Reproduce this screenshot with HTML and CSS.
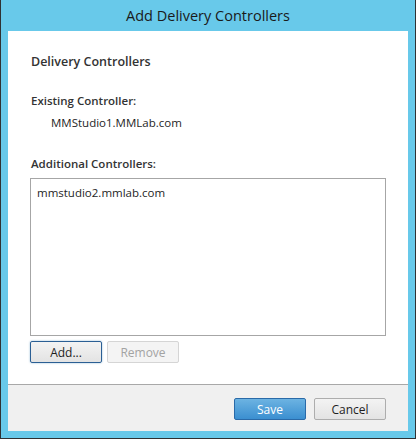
FILE: index.html
```html
<!DOCTYPE html>
<html lang="en">

<head>
    <meta charset="UTF-8">
    <title>Add Delivery Controllers</title>
    <link rel="stylesheet" href="styles.css">
</head>

<body>

    <div class="window">
        <div class="titlebar">Add Delivery Controllers</div>

        <div class="content">
            <div class="panel">
                <h2 class="heading">Delivery Controllers</h2>

                <div class="label existing-label">Existing Controller:</div>
                <div class="existing-value">MMStudio1.MMLab.com</div>

                <div class="label additional-label">Additional Controllers:</div>
                <div class="listbox">
                    <div class="list-item">mmstudio2.mmlab.com</div>
                </div>

                <div class="list-buttons">
                    <button type="button" class="btn btn-focus">Add...</button>
                    <button type="button" class="btn" disabled>Remove</button>
                </div>
            </div>

            <div class="footer">
                <button type="button" class="btn btn-primary">Save</button>
                <button type="button" class="btn">Cancel</button>
            </div>
        </div>
    </div>

</body>

</html>
```

FILE: styles.css
```css
body {
    margin: 0;
    padding: 0;
    font-family: "Open Sans", "Noto Sans", sans-serif;
    font-size: 11.5px;
    color: #1e1e1e;
}

.window {
    width: 416px;
    height: 439px;
    box-sizing: border-box;
    background-color: #68c9ea;
    border: 1px solid #2f3133;
    border-top: none;
    padding: 0 7px 7px 7px;
    display: flex;
    flex-direction: column;
}

.titlebar {
    height: 31px;
    line-height: 31px;
    text-align: center;
    font-size: 14.5px;
    color: #1a1a1a;
}

.content {
    flex: 1;
    display: flex;
    flex-direction: column;
    background-color: #fff;
}

.panel {
    flex: 1;
    padding: 23px 22px 0 22px;
}

.heading {
    margin: 0;
    font-size: 12.5px;
    font-weight: 600;
    line-height: 16px;
    color: #333;
    padding-left: 1px;
}

.label {
    font-weight: 600;
    line-height: 16px;
    color: #333;
    padding-left: 1px;
}

.existing-label {
    margin-top: 23px;
}

.existing-value {
    margin-top: 6px;
    line-height: 16px;
    padding-left: 21px;
}

.additional-label {
    margin-top: 25px;
}

.listbox {
    margin-top: 6px;
    height: 158px;
    box-sizing: border-box;
    border: 1px solid #a6a6a6;
    padding: 6px 6px;
}

.list-item {
    line-height: 16px;
}

.list-buttons {
    margin-top: 5px;
    display: flex;
    gap: 5px;
}

.btn {
    width: 72px;
    height: 22px;
    box-sizing: border-box;
    font-family: inherit;
    font-size: 12px;
    color: #1e1e1e;
    border: 1px solid #adadad;
    border-radius: 2px;
    background: linear-gradient(#f3f3f3, #e3e3e3);
    padding: 0;
}

.btn-focus {
    border-color: #2b5f94;
    box-shadow: 0 0 2px rgba(60, 127, 177, 0.6);
}

.btn:disabled {
    color: #a3a3a3;
    border-color: #d5d5d5;
    background: #f4f4f4;
}

.btn-primary {
    color: #fff;
    border-color: #2a6aa8;
    background: linear-gradient(#6cb3e2, #3b8fd0);
}

.footer {
    height: 47px;
    box-sizing: border-box;
    border-top: 1px solid #a8a8a8;
    background-color: #f0f0f0;
    display: flex;
    justify-content: flex-end;
    align-items: flex-start;
    gap: 8px;
    padding: 13px 22px 0 0;
}
```
